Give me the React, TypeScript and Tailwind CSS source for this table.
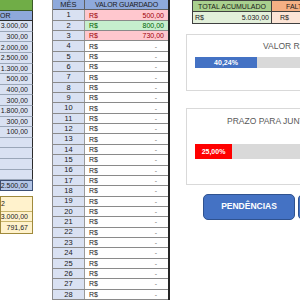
import React from 'react'

const leftValues = ['3.000,00', '300,00', '2.000,00', '2.500,00', '1.300,00', '500,00', '400,00', '300,00', '1.800,00', '300,00', '100,00', '', '', '', '']

type Mes = { n: number; valor?: string; tone?: 'red' | 'green' }

const meses: Mes[] = Array.from({ length: 28 }, (_, i) => ({ n: i + 1 }))
meses[0] = { n: 1, valor: '500,00', tone: 'red' }
meses[1] = { n: 2, valor: '800,00', tone: 'green' }
meses[2] = { n: 3, valor: '730,00', tone: 'red' }

const toneClass = (tone?: 'red' | 'green') => {
  if (tone === 'red') return 'bg-[#ffc7ce] text-[#9c0006]'
  if (tone === 'green') return 'bg-[#c6efce] text-[#006100]'
  return 'bg-white text-[#1a1a1a]'
}

const LeftColumn: React.FC = () => (
  <div className="w-[33px] shrink-0 flex flex-col text-[7px] leading-none">
    <div className="h-[10.6px] bg-[#70ad47] border-r border-b border-[#3a5a26]" />
    <div className="h-[10.6px] bg-[#8ea9db] border-r border-b border-[#2b2b2b] flex items-center">OR</div>
    {leftValues.map((v, i) => (
      <div key={i} className="h-[10.6px] bg-[#d9e1f2] border-r border-b border-r-[#2b2b2b] border-b-[#9aa6b8] flex items-center justify-end pr-[4px] text-[#1a1a1a]">
        {v}
      </div>
    ))}
    <div className="h-[10.6px] bg-[#b4c6e7] border border-[#3c4f73] flex items-center justify-end pr-[4px]">2.500,00</div>
    <div className="h-[5px]" />
    <div className="bg-[#fff2cc] border border-[#a08a3c] flex flex-col">
      <div className="h-[15px] flex items-center border-b border-[#c9b46a]">2</div>
      <div className="h-[10.6px] flex items-center justify-end pr-[4px] border-b border-[#c9b46a]">3.000,00</div>
      <div className="h-[10.6px] flex items-center justify-end pr-[4px]">791,67</div>
    </div>
  </div>
)

const MiddleTable: React.FC = () => (
  <div className="ml-[19px] w-[118px] shrink-0 flex flex-col text-[7px] leading-none border-l border-r-2 border-l-[#8c8c8c] border-r-[#262626]">
    <div className="h-[10.6px] flex bg-[#8ea9db] border-b border-[#5f5f5f] text-[#1a1a1a]">
      <div className="w-[32px] flex items-center justify-center border-r border-[#5f5f5f] text-[7.5px]">MÊS</div>
      <div className="flex-1 flex items-center justify-center tracking-[-0.2px]">VALOR GUARDADO</div>
    </div>
    {meses.map((m) => (
      <div key={m.n} className="h-[10.6px] flex border-b border-[#8a8a8a]">
        <div className="w-[32px] bg-[#d9e1f2] flex items-center justify-center border-r border-[#9a9a9a] text-[#1a1a1a] text-[7.5px]">{m.n}</div>
        <div className={`flex-1 flex items-center justify-between pl-[4px] ${m.valor ? 'pr-[4px]' : 'pr-[11px]'} ${toneClass(m.tone)}`}>
          <span>R$</span>
          <span className={m.valor ? '' : 'text-[#777]'}>{m.valor ?? '-'}</span>
        </div>
      </div>
    ))}
  </div>
)

const ProgressBar: React.FC<{ pct: number; width: number; color: string; label: string; h: string }> = ({ pct, width, color, label, h }) => (
  <div className={`flex bg-[#d9d9d9] ${h}`} style={{ width }}>
    <div className={`${color} flex items-center justify-center text-white font-bold text-[7px] leading-none`} style={{ width: (width * pct) / 100 }}>
      {label}
    </div>
  </div>
)

const RightColumn: React.FC = () => (
  <div className="flex-1 min-w-0 flex flex-col">
    <div className="ml-[22px] flex text-[7px] leading-none">
      <div className="w-[80px] shrink-0 flex flex-col border border-[#404040]">
        <div className="h-[11px] bg-[#a9d08e] flex items-center justify-center border-b border-[#404040]">TOTAL ACUMULADO</div>
        <div className="h-[10.6px] bg-[#e2efda] flex items-center justify-between pl-[2px] pr-[2px]">
          <span>R$</span>
          <span>5.030,00</span>
        </div>
      </div>
      <div className="w-[80px] shrink-0 flex flex-col border-y border-[#404040]">
        <div className="h-[11px] bg-[#f4b084] flex items-center pl-[14px] border-b border-[#404040]">FALTA</div>
        <div className="h-[10.6px] bg-[#fce4d6] flex items-center pl-[8px]">R$</div>
      </div>
    </div>

    <div className="ml-[16px] mt-[10px] w-[200px] h-[57px] border border-[#d9d9d9] bg-white flex flex-col">
      <div className="pl-[76px] pt-[6px] text-[8.5px] leading-[10px] text-[#595959] whitespace-nowrap">VALOR R$ GUARDADO</div>
      <div className="pl-[8px] mt-[6px]">
        <ProgressBar pct={40.24} width={154} color="bg-[#4472c4]" label="40,24%" h="h-[11px]" />
      </div>
    </div>

    <div className="ml-[16px] mt-[17px] w-[200px] h-[77px] border border-[#d9d9d9] bg-white flex flex-col">
      <div className="pl-[40px] pt-[7px] text-[8.5px] leading-[10px] text-[#595959] whitespace-nowrap">PRAZO PARA JUNTAR</div>
      <div className="pl-[8px] mt-[18px]">
        <ProgressBar pct={25} width={148} color="bg-[#ff0000]" label="25,00%" h="h-[15px]" />
      </div>
    </div>

    <div className="ml-[33px] mt-[9px] flex gap-[3px]">
      <div className="w-[92px] h-[26px] shrink-0 rounded-[5px] bg-[#4472c4] border border-[#2f528f] flex items-center justify-center text-white font-bold text-[8.5px]">
        PENDÊNCIAS
      </div>
      <div className="w-[92px] h-[26px] shrink-0 rounded-[5px] bg-[#4472c4] border border-[#2f528f]" />
    </div>
  </div>
)

export default function App() {
  return (
    <div className="w-[300px] h-[300px] overflow-hidden bg-white flex font-['Liberation_Sans',Arial,sans-serif] text-[#1a1a1a]">
      <LeftColumn />
      <MiddleTable />
      <RightColumn />
    </div>
  )
}
